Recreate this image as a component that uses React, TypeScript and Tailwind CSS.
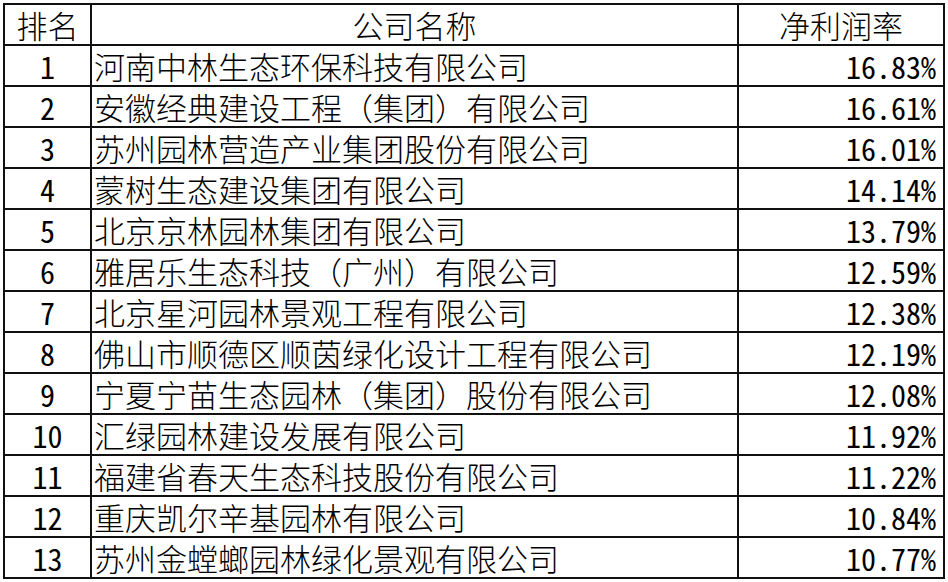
const rows: [number, string, string][] = [
  [1, "河南中林生态环保科技有限公司", "16.83%"],
  [2, "安徽经典建设工程（集团）有限公司", "16.61%"],
  [3, "苏州园林营造产业集团股份有限公司", "16.01%"],
  [4, "蒙树生态建设集团有限公司", "14.14%"],
  [5, "北京京林园林集团有限公司", "13.79%"],
  [6, "雅居乐生态科技（广州）有限公司", "12.59%"],
  [7, "北京星河园林景观工程有限公司", "12.38%"],
  [8, "佛山市顺德区顺茵绿化设计工程有限公司", "12.19%"],
  [9, "宁夏宁苗生态园林（集团）股份有限公司", "12.08%"],
  [10, "汇绿园林建设发展有限公司", "11.92%"],
  [11, "福建省春天生态科技股份有限公司", "11.22%"],
  [12, "重庆凯尔辛基园林有限公司", "10.84%"],
  [13, "苏州金螳螂园林绿化景观有限公司", "10.77%"],
];

const cell = "border-2 border-[#111] p-0 font-light";
const mono = "text-[30px] font-['Noto_Sans_Mono_CJK_SC','Noto_Sans_CJK_SC',monospace]";

export default function App() {
  return (
    <div className="w-[948px] h-[582px] bg-white p-[3px] text-black text-[31px] leading-none font-['Noto_Sans_CJK_SC','Noto_Sans',sans-serif]">
      <table className="w-full border-collapse border-2 border-[#111] table-fixed">
        <colgroup>
          <col className="w-[87px]" />
          <col className="w-[647px]" />
          <col />
        </colgroup>
        <thead>
          <tr className="h-[41px]">
            <th className={`${cell} text-center`}>排名</th>
            <th className={`${cell} text-center`}>公司名称</th>
            <th className={`${cell} text-center`}>净利润率</th>
          </tr>
        </thead>
        <tbody>
          {rows.map(([rank, name, rate]) => (
            <tr key={rank} className="h-[41px]">
              <td className={`${cell} ${mono} text-center`}>{rank}</td>
              <td className={`${cell} text-left pl-[2px] whitespace-nowrap`}>{name}</td>
              <td className={`${cell} ${mono} text-right pr-[7px]`}>{rate}</td>
            </tr>
          ))}
        </tbody>
      </table>
    </div>
  );
}
